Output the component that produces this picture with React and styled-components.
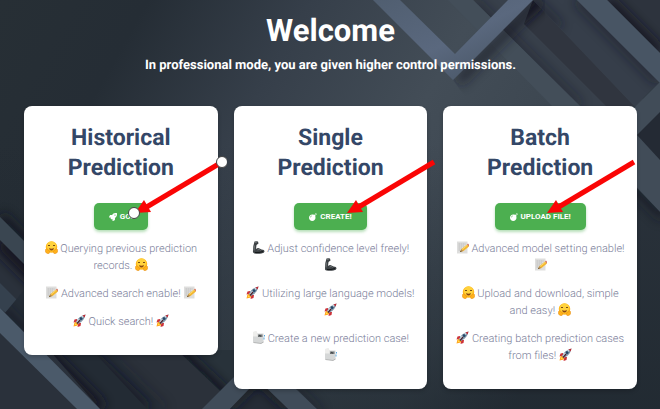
import React from "react";
import styled, { createGlobalStyle } from "styled-components";
import { FaRocket, FaBomb } from "react-icons/fa";

const GlobalStyle = createGlobalStyle`
  * { box-sizing: border-box; }
  body {
    margin: 0;
    background: #29313a;
    font-family: Roboto, "Liberation Sans", sans-serif;
    text-rendering: geometricPrecision;
  }
`;

const Page = styled.main`
  position: relative;
  isolation: isolate;
  min-height: 100vh;
  overflow: hidden;
  padding: 12px 23px 19px 24px;
`;

const Backdrop = styled.svg`
  position: absolute;
  inset: 0;
  z-index: -1;
  width: 100%;
  height: 100%;
`;

const Header = styled.header`
  color: #fff;
  text-align: center;
`;

const Title = styled.h1`
  margin: 0;
  font-size: 31px;
  line-height: 38px;
  font-weight: 700;
`;

const Subtitle = styled.p`
  margin: 6px 0 0;
  font-size: 13px;
  line-height: 20px;
  font-weight: 700;
`;

const Cards = styled.div`
  display: grid;
  grid-template-columns: repeat(3, 1fr);
  align-items: start;
  gap: 16px;
  margin-top: 30px;
`;

const Card = styled.section`
  position: relative;
  display: flex;
  flex-direction: column;
  align-items: center;
  padding: 17px 12px 25px;
  border-radius: 8px;
  background: #fff;
  box-shadow: 0 2px 4px rgba(0, 0, 0, 0.2);
  text-align: center;
`;

const CardTitle = styled.h2`
  width: min-content;
  margin: 0;
  color: #344767;
  font-size: 23px;
  line-height: 30px;
  font-weight: 700;
`;

const Action = styled.button`
  display: flex;
  align-items: center;
  gap: 3px;
  height: 27px;
  margin: 20px 0 10px;
  padding: 0 15px;
  border: 0;
  border-radius: 5px;
  background: #4caf50;
  box-shadow: 0 2px 3px rgba(76, 175, 80, 0.4);
  color: #fff;
  font: 700 8px/12px Roboto, "Liberation Sans", sans-serif;
  text-transform: uppercase;
  cursor: pointer;
`;

const Note = styled.p`
  margin: 0;
  color: #7b809a;
  font-size: 11px;
  line-height: 17px;
  font-weight: 300;

  & + & { margin-top: 11px; }
`;

const Glyph = styled.svg`
  width: 13px;
  height: 13px;
  vertical-align: -2px;
`;

const Arrow = styled.svg`
  position: absolute;
  top: 48px;
  left: calc(50% + ${(p) => p.$shift}px);
  z-index: 1;
  width: 100px;
  height: 70px;
  margin-left: -8px;
  pointer-events: none;
`;

function Emoji({ kind }) {
  return (
    <Glyph viewBox="0 0 26 26" aria-hidden="true">
      {kind === "hug" && (
        <>
          <circle cx="13" cy="12" r="11.5" fill="#ffb91f" />
          <circle cx="13" cy="10" r="9" fill="#ffd23c" />
          <path d="M6 10q2-4 4 0M16 10q2-4 4 0" fill="none" stroke="#6b3c12" strokeWidth="1.8" />
          <path d="M8 14q5 3 10 0q-1 5-5 5t-5-5" fill="#8a4513" />
          <path d="M1 17q3-3 4 0l4 3q2 3-1 5q-5 1-7-3zM25 17q-3-3-4 0l-4 3q-2 3 1 5q5 1 7-3z" fill="#ffb11b" stroke="#e58a12" />
        </>
      )}
      {kind === "memo" && (
        <>
          <path d="M2 1h21v24H2z" fill="#dededd" />
          <path d="M5 6h14M5 10h12M5 14h8M5 18h5" stroke="#aaa" strokeWidth="1.3" strokeDasharray="3 1" />
          <path d="M8 22l3-6L22 7l4 4-11 9z" fill="#f3b72f" />
          <path d="M11 18L23 8" stroke="#ffe17a" strokeWidth="1.5" />
          <path d="M22 7l2-2 3 4-1 2z" fill="#d46c55" />
          <path d="M8 22l3-6 4 4z" fill="#bd9256" />
          <path d="M8 22l2-3 1 2z" fill="#333" />
        </>
      )}
      {kind === "rocket" && (
        <>
          <path d="M1 25l2-8 4-2 5 5-3 3z" fill="#ff9e16" />
          <path d="M3 23l2-5 3 3z" fill="#ffe252" />
          <path d="M8 10l-5 1-2 6 7-2zM16 18l-1 6-6 2 2-8z" fill="#cc3138" />
          <path d="M6 16Q10 5 25 1Q22 15 10 20z" fill="#8197aa" />
          <path d="M7 16Q12 6 24 2L9 18z" fill="#d5e0e8" />
          <path d="M19 3q3-1 6-2-1 4-2 6z" fill="#b92932" />
          <circle cx="16" cy="9" r="3" fill="#244768" />
          <path d="M8 19l6-7" stroke="#4b2430" strokeWidth="2.4" />
        </>
      )}
      {kind === "arm" && (
        <>
          <path d="M5 1q4-1 7 0l1 4-4 3-1 8q4-3 7-1l4 2q6 0 6 4 0 3-6 4-7 1-14 0-4-1-3-6Q2 9 5 1z" fill="#3d4245" />
          <path d="M6 3l4-1M5 9l-1 10M11 18q4-3 6 1" fill="none" stroke="#7b8082" strokeWidth="1.6" />
          <path d="M6 23q8 1 16-2" stroke="#15191b" strokeWidth="2" fill="none" />
        </>
      )}
      {kind === "page" && (
        <>
          <path d="M2 2l7-1 2 4h12v18l-5 2-16-2z" fill="#d5d7d7" />
          <path d="M2 2l7-1 2 4v6H2z" fill="#eeeeec" />
          <path d="M3 23l15 2 5-3" fill="none" stroke="#a5a7a7" strokeWidth="1.5" />
          <path d="M12 7h9v5h-9z" fill="#777b7c" />
          <path d="M14 8l4 3M17 8l-3 3" stroke="#343a3c" strokeWidth="1.5" />
          <path d="M25 8v3M24 13v4" stroke="#59a8df" strokeWidth="2" />
        </>
      )}
    </Glyph>
  );
}

function Pointer({ shift, handles }) {
  return (
    <Arrow $shift={shift} viewBox="0 0 100 70" aria-hidden="true">
      <path d="M95 8L18 54" stroke="#fa0505" strokeWidth="5" />
      <path d="M8 59L17 46L24 58Z" fill="#fa0505" />
      {handles && (
        <g fill="#fff" stroke="#444" strokeWidth="1">
          <circle cx="95" cy="8" r="5.5" />
          <circle cx="7" cy="59" r="5.5" />
        </g>
      )}
    </Arrow>
  );
}

/* A flat panel whose given edge lies in the shade of its neighbour. */
function Panel({ id, d, fill, shade, depth = 12, opacity = 1 }) {
  return (
    <g>
      <clipPath id={id}>
        <path d={d} />
      </clipPath>
      <path d={d} fill={fill} />
      <g clipPath={`url(#${id})`}>
        <path d={shade} fill="none" stroke="#121821" strokeWidth={depth} opacity={opacity} filter="url(#soft)" />
      </g>
    </g>
  );
}

function Background() {
  return (
    <Backdrop viewBox="0 0 660 409" preserveAspectRatio="xMidYMid slice" aria-hidden="true">
      <defs>
        <linearGradient id="base" x1="0" y1="0" x2="1" y2="0.35">
          <stop offset="0" stopColor="#272f35" />
          <stop offset="0.2" stopColor="#252d35" />
          <stop offset="0.42" stopColor="#363f4a" />
          <stop offset="0.65" stopColor="#434d57" />
          <stop offset="0.85" stopColor="#3c4650" />
          <stop offset="1" stopColor="#2b333c" />
        </linearGradient>
        <linearGradient id="fall" x1="0" y1="0" x2="0" y2="1">
          <stop offset="0.35" stopColor="#1c252c" stopOpacity="0" />
          <stop offset="1" stopColor="#1c252c" stopOpacity="0.6" />
        </linearGradient>
        <linearGradient id="steel" x1="0" y1="0" x2="1" y2="1">
          <stop offset="0" stopColor="#505e70" />
          <stop offset="0.5" stopColor="#5a687e" />
          <stop offset="1" stopColor="#424f5d" />
        </linearGradient>
        <filter id="soft" filterUnits="userSpaceOnUse" x="-50" y="-50" width="760" height="520">
          <feGaussianBlur stdDeviation="6" />
        </filter>
      </defs>
      <path d="M0 0H660V409H0Z" fill="url(#base)" />
      <path d="M0 0H660V409H0Z" fill="url(#fall)" />

      <Panel id="p1" d="M473 0H545L650 106H580Z" fill="#38404b" shade="M473 0L580 106" depth={8} opacity={0.5} />
      <Panel id="p2" d="M533 0L524 24L606 106H634Z" fill="#30353f" shade="M510 24L545 -5" />
      <Panel id="p3" d="M533 0H577L659 82L635 106Z" fill="#363e4a" shade="M577 0L659 82M533 0L560 27" depth={8} opacity={0.6} />
      <Panel id="p4" d="M607 0H660V53Z" fill="#2d333d" shade="M607 0L660 53" depth={10} />
      <path d="M577 0H607L660 53V83Z" fill="#485564" />
      <path d="M448 0H473L580 106H552Z" fill="#434e59" />
      <Panel id="p5" d="M453 80L533 0H545V60L475 110Z" fill="none" shade="M458 82L540 0" depth={10} opacity={0.6} />
      <path d="M373 0H400L455 54L508 0H533L453 80Z" fill="url(#steel)" />
      <path d="M660 82L622 120V173L660 212Z" fill="#414c58" />
      <path d="M660 112L637 135L660 160Z" fill="#242a34" />
      <Panel id="p6" d="M630 180L660 212V270H630Z" fill="none" shade="M630 182L665 217" opacity={0.6} />

      <Panel id="p7" d="M0 217L192 409H0Z" fill="#2a313b" shade="M0 240L60 300" depth={20} />
      <Panel id="p8" d="M0 165V217L60 277V225Z" fill="none" shade="M0 217L60 277" opacity={0.8} />
      <path d="M0 217L45 262V285L0 240Z" fill="#3a4651" />
      <path d="M0 283L17 300L29 284V331L0 308Z" fill="#35414e" />
      <Panel id="p9" d="M5 313L29 284V337Z" fill="#252d37" shade="M0 308L30 338" opacity={0.5} />
      <Panel id="p10" d="M45 345H92L147 409H100Z" fill="#232b34" shade="M45 353L101 409" depth={14} />
      <Panel id="p11" d="M92 350H110L165 409H147Z" fill="#252d37" shade="M92 356L147 409" depth={8} />
      <Panel id="p12" d="M110 350H183L243 409H165Z" fill="#2b313a" shade="M110 356L165 409" depth={5} opacity={0.5} />
      <Panel id="p13" d="M177 350H235V405Z" fill="#28323a" shade="M177 350L235 405" />
      <path d="M0 308L100 409H77L0 333Z" fill="#4b5a6a" />
      <path d="M202 409L258 353L317 409H288L258 380L230 409Z" fill="#404c59" />
      <Panel id="p14" d="M230 409L258 380L288 409Z" fill="#252c36" shade="M230 409L258 380L288 409" depth={5} />
      <Panel id="p15" d="M298 390H350V409H317Z" fill="none" shade="M290 383L320 413" depth={8} opacity={0.5} />
    </Backdrop>
  );
}

const cards = [
  {
    title: "Historical Prediction",
    action: "Go!",
    Icon: FaRocket,
    shift: 14,
    handles: true,
    notes: [
      ["hug", "Querying previous prediction records."],
      ["memo", "Advanced search enable!"],
      ["rocket", "Quick search!"],
    ],
  },
  {
    title: "Single Prediction",
    action: "Create!",
    Icon: FaBomb,
    shift: 17,
    notes: [
      ["arm", "Adjust confidence level freely!"],
      ["rocket", "Utilizing large language models!"],
      ["page", "Create a new prediction case!"],
    ],
  },
  {
    title: "Batch Prediction",
    action: "Upload file!",
    Icon: FaBomb,
    shift: 7,
    notes: [
      ["memo", "Advanced model setting enable!"],
      ["hug", "Upload and download, simple and easy!"],
      ["rocket", "Creating batch prediction cases from files!"],
    ],
  },
];

export default function App() {
  return (
    <>
      <GlobalStyle />
      <Page>
        <Background />
        <Header>
          <Title>Welcome</Title>
          <Subtitle>In professional mode, you are given higher control permissions.</Subtitle>
        </Header>
        <Cards>
          {cards.map(({ title, action, Icon, shift, handles, notes }) => (
            <Card key={title}>
              <CardTitle>{title}</CardTitle>
              <Action type="button">
                <Icon aria-hidden="true" />
                {action}
              </Action>
              {notes.map(([kind, text]) => (
                <Note key={text}>
                  <Emoji kind={kind} /> {text} <Emoji kind={kind} />
                </Note>
              ))}
              <Pointer shift={shift} handles={handles} />
            </Card>
          ))}
        </Cards>
      </Page>
    </>
  );
}
